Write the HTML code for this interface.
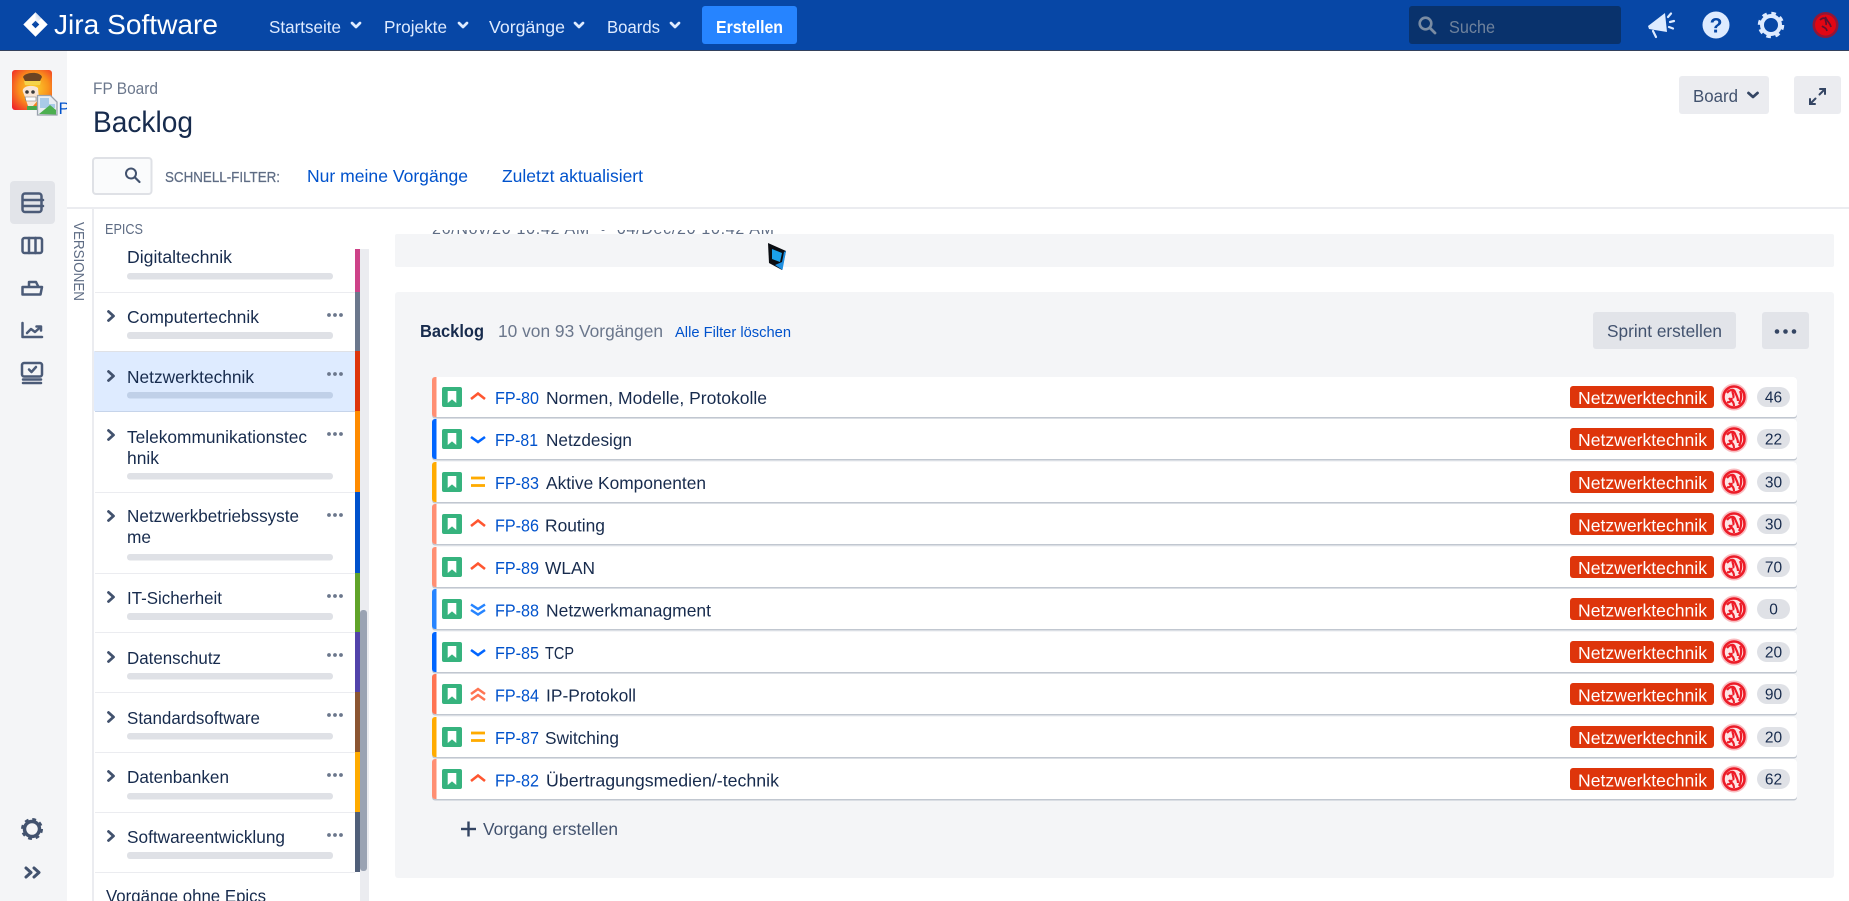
<!DOCTYPE html>
<html lang="de">
<head>
<meta charset="utf-8">
<title>Backlog - Jira Software</title>
<style>
html,body{margin:0;padding:0;width:1849px;height:901px;overflow:hidden;background:#fff}
svg{display:block}
text{font-family:"Liberation Sans",Arial,sans-serif;white-space:pre}
.nav{font-size:17.5px;fill:#deebff}
.ep{font-size:17.5px;fill:#172b4d}
.key{font-size:17.5px;fill:#0052cc}
.sum{font-size:17.5px;fill:#172b4d}
.lab{font-size:17.5px;fill:#fff}
.bdg{font-size:15.5px;fill:#172b4d;text-anchor:middle}
.lnk{font-size:17.5px;fill:#0052cc}
.ico{fill:none;stroke:#4b5b78;stroke-width:2.5;stroke-linejoin:round;stroke-linecap:round}
.chv{fill:none;stroke:#deebff;stroke-width:2.700;stroke-linecap:round;stroke-linejoin:round}
.bar{fill:#dfe1e6}
.sep{fill:#ebecf0}
.dot{fill:#6b778c}
</style>
</head>
<body>
<svg xmlns="http://www.w3.org/2000/svg" width="1849" height="901" viewBox="0 0 1849 901">
<defs>
  <clipPath id="cliptop"><rect x="395" y="230" width="500" height="5"/></clipPath>
  <clipPath id="clipP"><rect x="58" y="95" width="9" height="25"/></clipPath>
  <clipPath id="clipA"><rect x="12" y="70" width="40" height="40" rx="3"/></clipPath>
  <radialGradient id="pa" cx="0.55" cy="0.45" r="0.75"><stop offset="0" stop-color="#fbd22c"/><stop offset="0.5" stop-color="#f9911c"/><stop offset="1" stop-color="#ee1c2b"/></radialGradient>
  <linearGradient id="lg1" x1="0" y1="1" x2="1" y2="0"><stop offset="0" stop-color="#ffffff" stop-opacity="0"/><stop offset="1" stop-color="#0747a6" stop-opacity=".55"/></linearGradient>
  <g id="dots"><circle cx="329" cy="0" r="1.9"/><circle cx="335" cy="0" r="1.9"/><circle cx="341" cy="0" r="1.9"/></g>
  <polyline id="ech" points="108.500,-4.500 113.500,0 108.500,4.500" fill="none" stroke="#42526e" stroke-width="2.800" stroke-linecap="round" stroke-linejoin="round"/>
  <path id="st" d="M435 0h1.500v40h-1.500a3 3 0 0 1-3-3v-34a3 3 0 0 1 3-3z"/>
  <g id="rb">
    <rect x="432" y="0" width="1365" height="41.500" rx="3" fill="#c1c7d0"/>
    <rect x="432" y="0" width="1365" height="40" rx="3" fill="#fff"/>
    <rect x="442" y="10" width="20" height="20" rx="2" fill="#36b37e"/>
    <path d="M447.700 14h8.600v12l-4.300-3.600-4.300 3.600z" fill="#fff"/>
    <rect x="1570" y="9" width="144" height="22" rx="3" fill="#de350b"/>
    <circle cx="1734" cy="20" r="13.500" fill="#f9bcc0"/>
    <circle cx="1734" cy="20" r="10.500" fill="#fde4e5" stroke="#ec1c28" stroke-width="2.600"/>
    <path d="M1727 16c3-4 7-4 8-1s3 5 3 9M1729 21c2 3 5 3 5 8M1733 12c-2 4 2 6 0 9M1740 14c2 4 1 9-1 13M1727 25c3 1 4-1 5-4" fill="none" stroke="#ee1b27" stroke-width="2.200"/>
    <rect x="1757" y="10" width="33" height="20" rx="10" fill="#dfe1e6"/>
  </g>
  <polyline id="phigh" points="471,22 478,16.500 485,22" fill="none" stroke="#ff5630" stroke-width="2.600"/>
  <polyline id="plow" points="471,18 478,23 485,18" fill="none" stroke="#0065ff" stroke-width="2.600"/>
  <g id="pmed" stroke="#ffab00" stroke-width="2.800"><line x1="471" x2="485" y1="16" y2="16"/><line x1="471" x2="485" y1="23.500" y2="23.500"/></g>
  <g id="plowest" fill="none" stroke="#2684ff" stroke-width="2.500"><polyline points="471,15.500 478,20 485,15.500"/><polyline points="471,21 478,25.500 485,21"/></g>
  <g id="phighest" fill="none" stroke="#ff7452" stroke-width="2.500"><polyline points="471,20 478,15 485,20"/><polyline points="471,26 478,21 485,26"/></g>
</defs>

<!-- Header -->
<rect x="0" y="0" width="1849" height="50" fill="#0747a6"/>
<rect x="0" y="50" width="1849" height="1" fill="#33415c"/>
<path fill-rule="evenodd" d="M35.500 12.300L47.700 24.500 35.500 36.800 23.300 24.500zM35.500 20.700L31.700 24.500l3.800 3.800 3.800-3.800z" fill="#fff"/>
<path d="M35.500 12.300l5.800 5.800-6 6-3.600.400 3.800-3.800z" fill="url(#lg1)" opacity=".6"/>
<text x="54" y="34" font-size="28" fill="#fff" textLength="164" lengthAdjust="spacingAndGlyphs">Jira Software</text>
<text class="nav" x="269" y="33" textLength="72" lengthAdjust="spacingAndGlyphs">Startseite</text>
<polyline class="chv" points="352,23 356,27 360,23"/>
<text class="nav" x="384" y="33" textLength="63" lengthAdjust="spacingAndGlyphs">Projekte</text>
<polyline class="chv" points="459,23 463,27 467,23"/>
<text class="nav" x="489" y="33" textLength="76" lengthAdjust="spacingAndGlyphs">Vorgänge</text>
<polyline class="chv" points="575,23 579,27 583,23"/>
<text class="nav" x="607" y="33" textLength="53" lengthAdjust="spacingAndGlyphs">Boards</text>
<polyline class="chv" points="671,23 675,27 679,23"/>
<rect x="702" y="6" width="95" height="38" rx="3" fill="#2684ff"/>
<text x="716" y="33" font-size="17.500" font-weight="700" fill="#fff" textLength="67" lengthAdjust="spacingAndGlyphs">Erstellen</text>

<rect x="1409" y="6" width="212" height="38" rx="3" fill="#09326c"/>
<circle cx="1425.500" cy="23.500" r="5.800" fill="none" stroke="#7a8ca3" stroke-width="2.600"/>
<line x1="1430" y1="28" x2="1435" y2="33" stroke="#7a8ca3" stroke-width="2.800" stroke-linecap="round"/>
<text x="1449" y="33" font-size="17.500" fill="#6f829c" textLength="46" lengthAdjust="spacingAndGlyphs">Suche</text>
<path d="M1648 26L1665 13l2 19-18-3z" fill="#deebff"/>
<g stroke="#deebff" stroke-width="2.200" stroke-linecap="round" fill="none"><line x1="1653" y1="31" x2="1656" y2="37"/><line x1="1668" y1="17" x2="1671" y2="13.500"/><line x1="1670" y1="22" x2="1674" y2="21"/><line x1="1669" y1="27" x2="1673" y2="28.500"/></g>
<circle cx="1716" cy="25" r="13.500" fill="#deebff"/>
<text x="1716" y="32.500" font-size="21" font-weight="700" fill="#0747a6" text-anchor="middle">?</text>
<circle cx="1771" cy="25" r="9" fill="none" stroke="#deebff" stroke-width="4"/>
<circle cx="1771" cy="25" r="11.500" fill="none" stroke="#deebff" stroke-width="3.500" stroke-dasharray="4.500 4.530"/>
<circle cx="1825.500" cy="25" r="13" fill="#8f1738"/>
<circle cx="1825.500" cy="25" r="10.500" fill="#e30613"/>
<path d="M1820 20c3-3 6-2 7 0s3 3 4 7M1822 26c2 2 4 1 5 5M1826 17c-2 3 1 5 0 8" fill="none" stroke="#5d1230" stroke-width="1.700"/>

<!-- Left nav -->
<rect x="0" y="51" width="67" height="850" fill="#f4f5f7"/>
<g clip-path="url(#clipA)">
<rect x="12" y="70" width="40" height="40" fill="url(#pa)"/>
<path d="M23 77c2-5 17-6 19 0l-2 4H25z" fill="#6d4423"/>
<path d="M24 81h17l-1 4H25z" fill="#f5d34a"/>
<path d="M23 92c-2-6 10-8 15-4l1 11-6 7h-5l-3-9z" fill="#f8e5d5"/>
<circle cx="27" cy="92" r="1.800" fill="#3a3a3a"/><circle cx="33" cy="92" r="1.800" fill="#3a3a3a"/>
<path d="M25 97h11v4H26z" fill="#fff" stroke="#777" stroke-width=".6"/>
<path d="M27 106h10v4H27z" fill="#48a848"/>
</g>
<path d="M37.500 95.500h13l6.500 6.500v13H37.500z" fill="#e9edf2" stroke="#9aa2ad" stroke-width="1.300"/>
<path d="M40 98h9v6h6v4H40z" fill="#a9cbe8"/>
<path d="M39 114l11-9 6 5v4.500z" fill="#4caf50"/>
<text x="58.500" y="114" font-size="17" fill="#0052cc" clip-path="url(#clipP)">P</text>

<rect x="10" y="181" width="45" height="43" rx="4" fill="#e2e4e9"/>
<g class="ico">
  <rect x="22.500" y="193.500" width="19" height="18.500" rx="2.500"/><line x1="23" y1="200" x2="43" y2="200"/><line x1="23" y1="206" x2="43" y2="206"/>
  <rect x="22.500" y="238" width="19.500" height="15" rx="2"/><line x1="29" y1="238" x2="29" y2="253"/><line x1="35.500" y1="238" x2="35.500" y2="253"/>
  <path d="M29 286v-4h7l2 4"/><path d="M22.500 287h19.500l-1.500 7.500h-18z"/>
  <path d="M22.500 323v14h19.500"/><polyline points="27,333 31,329 35,332 40.500,327"/><polyline points="36.500,326.500 41,326.500 41,330.500"/>
  <rect x="22" y="363" width="20" height="13.500" rx="2"/><polyline points="29,369.500 31.500,372 36,367"/><line x1="23" y1="379.500" x2="41" y2="379.500"/><line x1="23" y1="383" x2="41" y2="383"/>
</g>
<circle cx="32" cy="829" r="7.500" fill="none" stroke="#42526e" stroke-width="3.500"/>
<circle cx="32" cy="829" r="9.500" fill="none" stroke="#42526e" stroke-width="3" stroke-dasharray="3.700 3.760"/>
<g fill="none" stroke="#42526e" stroke-width="3" stroke-linecap="round" stroke-linejoin="round"><polyline points="26,868 31,872.500 26,877"/><polyline points="34,868 39,872.500 34,877"/></g>

<!-- Page title -->
<text x="93" y="94" font-size="17" fill="#6b778c" textLength="65" lengthAdjust="spacingAndGlyphs">FP Board</text>
<text x="93" y="132" font-size="29.500" fill="#172b4d" textLength="100" lengthAdjust="spacingAndGlyphs">Backlog</text>
<rect x="1679" y="76" width="90" height="38" rx="3" fill="#ebecf0"/>
<text x="1693" y="102" font-size="17.500" fill="#42526e" textLength="45" lengthAdjust="spacingAndGlyphs">Board</text>
<polyline points="1748.500,93 1753,97 1757.500,93" fill="none" stroke="#344563" stroke-width="2.800" stroke-linecap="round" stroke-linejoin="round"/>
<rect x="1794" y="76" width="47" height="38" rx="3" fill="#ebecf0"/>
<g fill="none" stroke="#344563" stroke-width="2" stroke-linecap="round"><line x1="1810" y1="104" x2="1815.500" y2="98.500"/><polyline points="1810,99 1810,104 1815,104"/><line x1="1819.500" y1="94.500" x2="1825" y2="89"/><polyline points="1820,89 1825,89 1825,94"/></g>

<rect x="93" y="158" width="58.500" height="36" rx="3" fill="#fafbfc" stroke="#dfe1e6" stroke-width="2"/>
<circle cx="131" cy="173.500" r="5" fill="none" stroke="#42526e" stroke-width="2"/>
<line x1="135" y1="177.500" x2="139.500" y2="182" stroke="#42526e" stroke-width="2.200" stroke-linecap="round"/>
<text x="165" y="182" font-size="15" fill="#5e6c84" stroke="#5e6c84" stroke-width=".25" textLength="115" lengthAdjust="spacingAndGlyphs">SCHNELL-FILTER:</text>
<text class="lnk" x="307" y="182" textLength="161" lengthAdjust="spacingAndGlyphs">Nur meine Vorgänge</text>
<text class="lnk" x="502" y="182" textLength="141" lengthAdjust="spacingAndGlyphs">Zuletzt aktualisiert</text>

<rect x="67" y="207" width="1782" height="2" fill="#ebecf0"/>

<!-- Versions tab + Epics panel -->
<rect x="92" y="209" width="2" height="692" fill="#ebecf0"/>
<text transform="translate(74,222) rotate(90)" font-size="15" fill="#5e6c84" textLength="79" lengthAdjust="spacingAndGlyphs">VERSIONEN</text>
<text x="105" y="234" font-size="15" fill="#5e6c84" textLength="38" lengthAdjust="spacingAndGlyphs">EPICS</text>

<rect x="360" y="249" width="9" height="652" fill="#ebecf0"/>
<rect x="360" y="610" width="7" height="261" rx="3" fill="#9aa3b3"/>

<rect x="94" y="351" width="261" height="60" fill="#deebff"/>

<rect x="355" y="249" width="5" height="43" fill="#cd4288"/>
<rect x="355" y="292" width="5" height="59" fill="#6b778c"/>
<rect x="355" y="351" width="5" height="60" fill="#de350b"/>
<rect x="355" y="411" width="5" height="81" fill="#ff8b00"/>
<rect x="355" y="492" width="5" height="81" fill="#0052cc"/>
<rect x="355" y="573" width="5" height="59" fill="#60a329"/>
<rect x="355" y="632" width="5" height="60" fill="#5243aa"/>
<rect x="355" y="692" width="5" height="60" fill="#8b5531"/>
<rect x="355" y="752" width="5" height="60" fill="#ffab00"/>
<rect x="355" y="812" width="5" height="60" fill="#505f79"/>

<rect class="sep" x="95" y="292" width="260" height="1"/>
<rect x="95" y="351" width="260" height="1" fill="#dfe1e6"/>
<rect x="95" y="411" width="260" height="1" fill="#c6d4ea"/>
<rect class="sep" x="95" y="492" width="260" height="1"/>
<rect class="sep" x="95" y="573" width="260" height="1"/>
<rect class="sep" x="95" y="632" width="260" height="1"/>
<rect class="sep" x="95" y="692" width="260" height="1"/>
<rect class="sep" x="95" y="752" width="260" height="1"/>
<rect class="sep" x="95" y="812" width="260" height="1"/>
<rect class="sep" x="95" y="872" width="260" height="1"/>

<text class="ep" x="127" y="263" textLength="105" lengthAdjust="spacingAndGlyphs">Digitaltechnik</text>
<rect class="bar" x="127" y="273" width="206" height="6.500" rx="3"/>

<use href="#ech" y="316"/><use href="#dots" class="dot" y="315"/>
<text class="ep" x="127" y="323" textLength="132" lengthAdjust="spacingAndGlyphs">Computertechnik</text>
<rect class="bar" x="127" y="332" width="206" height="7" rx="3"/>

<use href="#ech" y="376"/><use href="#dots" class="dot" y="374"/>
<text class="ep" x="127" y="383" textLength="127" lengthAdjust="spacingAndGlyphs">Netzwerktechnik</text>
<rect x="127" y="392" width="206" height="6.500" rx="3" fill="#c0d0e8"/>

<use href="#ech" y="435"/><use href="#dots" class="dot" y="434"/>
<text class="ep" x="127" y="443" textLength="180" lengthAdjust="spacingAndGlyphs">Telekommunikationstec</text>
<text class="ep" x="127" y="464" textLength="32" lengthAdjust="spacingAndGlyphs">hnik</text>
<rect class="bar" x="127" y="473" width="206" height="6.500" rx="3"/>

<use href="#ech" y="516"/><use href="#dots" class="dot" y="515"/>
<text class="ep" x="127" y="522" textLength="172" lengthAdjust="spacingAndGlyphs">Netzwerkbetriebssyste</text>
<text class="ep" x="127" y="543" textLength="24" lengthAdjust="spacingAndGlyphs">me</text>
<rect class="bar" x="127" y="554" width="206" height="6.500" rx="3"/>

<use href="#ech" y="597"/><use href="#dots" class="dot" y="596"/>
<text class="ep" x="127" y="604" textLength="95" lengthAdjust="spacingAndGlyphs">IT-Sicherheit</text>
<rect class="bar" x="127" y="613" width="206" height="7" rx="3"/>

<use href="#ech" y="657"/><use href="#dots" class="dot" y="655"/>
<text class="ep" x="127" y="664" textLength="94" lengthAdjust="spacingAndGlyphs">Datenschutz</text>
<rect class="bar" x="127" y="673" width="206" height="6.500" rx="3"/>

<use href="#ech" y="717"/><use href="#dots" class="dot" y="715"/>
<text class="ep" x="127" y="724" textLength="133" lengthAdjust="spacingAndGlyphs">Standardsoftware</text>
<rect class="bar" x="127" y="733" width="206" height="6.500" rx="3"/>

<use href="#ech" y="776"/><use href="#dots" class="dot" y="775"/>
<text class="ep" x="127" y="783" textLength="102" lengthAdjust="spacingAndGlyphs">Datenbanken</text>
<rect class="bar" x="127" y="793" width="206" height="6.500" rx="3"/>

<use href="#ech" y="836"/><use href="#dots" class="dot" y="835"/>
<text class="ep" x="127" y="843" textLength="158" lengthAdjust="spacingAndGlyphs">Softwareentwicklung</text>
<rect class="bar" x="127" y="852" width="206" height="7" rx="3"/>

<text class="ep" x="106" y="902" textLength="160" lengthAdjust="spacingAndGlyphs">Vorgänge ohne Epics</text>

<!-- Sprint panel remnant -->
<rect x="395" y="234" width="1439" height="33" rx="2" fill="#f4f5f7"/>
<g clip-path="url(#cliptop)"><text x="432" y="234" font-size="16" fill="#5e6c84" textLength="342" lengthAdjust="spacing">26/Nov/20 10:42 AM  •  04/Dec/20 10:42 AM</text></g>
<path d="M768 243l18 8-4 19-13-7z" fill="#0a0d12"/>
<path d="M772 249l10 4-2 9-8-3z" fill="#1ba0ea"/>
<path d="M775 265l7-3 2-10 2-1-3.500 19z" fill="#1f8fe0"/>

<!-- Backlog panel -->
<rect x="395" y="292" width="1439" height="586" rx="3" fill="#f4f5f7"/>
<text x="420" y="337" font-size="17.500" font-weight="700" fill="#172b4d" textLength="64" lengthAdjust="spacingAndGlyphs">Backlog</text>
<text x="498" y="337" font-size="17.500" fill="#6b778c" textLength="165" lengthAdjust="spacingAndGlyphs">10 von 93 Vorgängen</text>
<text x="675" y="337" font-size="15" fill="#0052cc" textLength="116" lengthAdjust="spacingAndGlyphs">Alle Filter löschen</text>
<rect x="1593" y="312" width="143" height="37" rx="3" fill="#e2e4e9"/>
<text x="1607" y="337" font-size="17.500" fill="#42526e" textLength="115" lengthAdjust="spacingAndGlyphs">Sprint erstellen</text>
<rect x="1762" y="312" width="47" height="37" rx="3" fill="#e2e4e9"/>
<circle cx="1777" cy="331.500" r="2.300" fill="#344563"/><circle cx="1785.500" cy="331.500" r="2.300" fill="#344563"/><circle cx="1794" cy="331.500" r="2.300" fill="#344563"/>

<!-- Issue rows -->
<g transform="translate(0,377)"><use href="#rb"/><use href="#st" fill="#ff8f73"/><use href="#phigh"/>
<text class="key" x="495" y="27" textLength="44" lengthAdjust="spacingAndGlyphs">FP-80</text><text class="sum" x="546" y="27" textLength="221" lengthAdjust="spacingAndGlyphs">Normen, Modelle, Protokolle</text>
<text class="lab" x="1578" y="27" textLength="129" lengthAdjust="spacingAndGlyphs">Netzwerktechnik</text><text class="bdg" x="1773.500" y="25.500">46</text></g>

<g transform="translate(0,419)"><use href="#rb"/><use href="#st" fill="#0065ff"/><use href="#plow"/>
<text class="key" x="495" y="27" textLength="43" lengthAdjust="spacingAndGlyphs">FP-81</text><text class="sum" x="546" y="27" textLength="86" lengthAdjust="spacingAndGlyphs">Netzdesign</text>
<text class="lab" x="1578" y="27" textLength="129" lengthAdjust="spacingAndGlyphs">Netzwerktechnik</text><text class="bdg" x="1773.500" y="25.500">22</text></g>

<g transform="translate(0,462)"><use href="#rb"/><use href="#st" fill="#ffab00"/><use href="#pmed"/>
<text class="key" x="495" y="27" textLength="44" lengthAdjust="spacingAndGlyphs">FP-83</text><text class="sum" x="546" y="27" textLength="160" lengthAdjust="spacingAndGlyphs">Aktive Komponenten</text>
<text class="lab" x="1578" y="27" textLength="129" lengthAdjust="spacingAndGlyphs">Netzwerktechnik</text><text class="bdg" x="1773.500" y="25.500">30</text></g>

<g transform="translate(0,504)"><use href="#rb"/><use href="#st" fill="#ff8f73"/><use href="#phigh"/>
<text class="key" x="495" y="27.500" textLength="44" lengthAdjust="spacingAndGlyphs">FP-86</text><text class="sum" x="545" y="27.500" textLength="60" lengthAdjust="spacingAndGlyphs">Routing</text>
<text class="lab" x="1578" y="27.500" textLength="129" lengthAdjust="spacingAndGlyphs">Netzwerktechnik</text><text class="bdg" x="1773.500" y="25.500">30</text></g>

<g transform="translate(0,547)"><use href="#rb"/><use href="#st" fill="#ff8f73"/><use href="#phigh"/>
<text class="key" x="495" y="27" textLength="44" lengthAdjust="spacingAndGlyphs">FP-89</text><text class="sum" x="545" y="27" textLength="50" lengthAdjust="spacingAndGlyphs">WLAN</text>
<text class="lab" x="1578" y="27" textLength="129" lengthAdjust="spacingAndGlyphs">Netzwerktechnik</text><text class="bdg" x="1773.500" y="25.500">70</text></g>

<g transform="translate(0,589)"><use href="#rb"/><use href="#st" fill="#2684ff"/><use href="#plowest"/>
<text class="key" x="495" y="27.500" textLength="44" lengthAdjust="spacingAndGlyphs">FP-88</text><text class="sum" x="546" y="27.500" textLength="165" lengthAdjust="spacingAndGlyphs">Netzwerkmanagment</text>
<text class="lab" x="1578" y="27.500" textLength="129" lengthAdjust="spacingAndGlyphs">Netzwerktechnik</text><text class="bdg" x="1773.500" y="25.500">0</text></g>

<g transform="translate(0,632)"><use href="#rb"/><use href="#st" fill="#0065ff"/><use href="#plow"/>
<text class="key" x="495" y="27" textLength="44" lengthAdjust="spacingAndGlyphs">FP-85</text><text class="sum" x="545" y="27" textLength="29" lengthAdjust="spacingAndGlyphs">TCP</text>
<text class="lab" x="1578" y="27" textLength="129" lengthAdjust="spacingAndGlyphs">Netzwerktechnik</text><text class="bdg" x="1773.500" y="25.500">20</text></g>

<g transform="translate(0,674)"><use href="#rb"/><use href="#st" fill="#ff7452"/><use href="#phighest"/>
<text class="key" x="495" y="27.500" textLength="44" lengthAdjust="spacingAndGlyphs">FP-84</text><text class="sum" x="546" y="27.500" textLength="90" lengthAdjust="spacingAndGlyphs">IP-Protokoll</text>
<text class="lab" x="1578" y="27.500" textLength="129" lengthAdjust="spacingAndGlyphs">Netzwerktechnik</text><text class="bdg" x="1773.500" y="25.500">90</text></g>

<g transform="translate(0,717)"><use href="#rb"/><use href="#st" fill="#ffab00"/><use href="#pmed"/>
<text class="key" x="495" y="27" textLength="44" lengthAdjust="spacingAndGlyphs">FP-87</text><text class="sum" x="545" y="27" textLength="74" lengthAdjust="spacingAndGlyphs">Switching</text>
<text class="lab" x="1578" y="27" textLength="129" lengthAdjust="spacingAndGlyphs">Netzwerktechnik</text><text class="bdg" x="1773.500" y="25.500">20</text></g>

<g transform="translate(0,759)"><use href="#rb"/><use href="#st" fill="#ff8f73"/><use href="#phigh"/>
<text class="key" x="495" y="27.500" textLength="44" lengthAdjust="spacingAndGlyphs">FP-82</text><text class="sum" x="546" y="27.500" textLength="233" lengthAdjust="spacingAndGlyphs">Übertragungsmedien/-technik</text>
<text class="lab" x="1578" y="27.500" textLength="129" lengthAdjust="spacingAndGlyphs">Netzwerktechnik</text><text class="bdg" x="1773.500" y="25.500">62</text></g>

<g stroke="#344563" stroke-width="2.400" stroke-linecap="butt"><line x1="461" y1="829" x2="476" y2="829"/><line x1="468.500" y1="821.500" x2="468.500" y2="836.500"/></g>
<text x="483" y="835" font-size="17.500" fill="#42526e" textLength="135" lengthAdjust="spacingAndGlyphs">Vorgang erstellen</text>
</svg>
</body>
</html>
